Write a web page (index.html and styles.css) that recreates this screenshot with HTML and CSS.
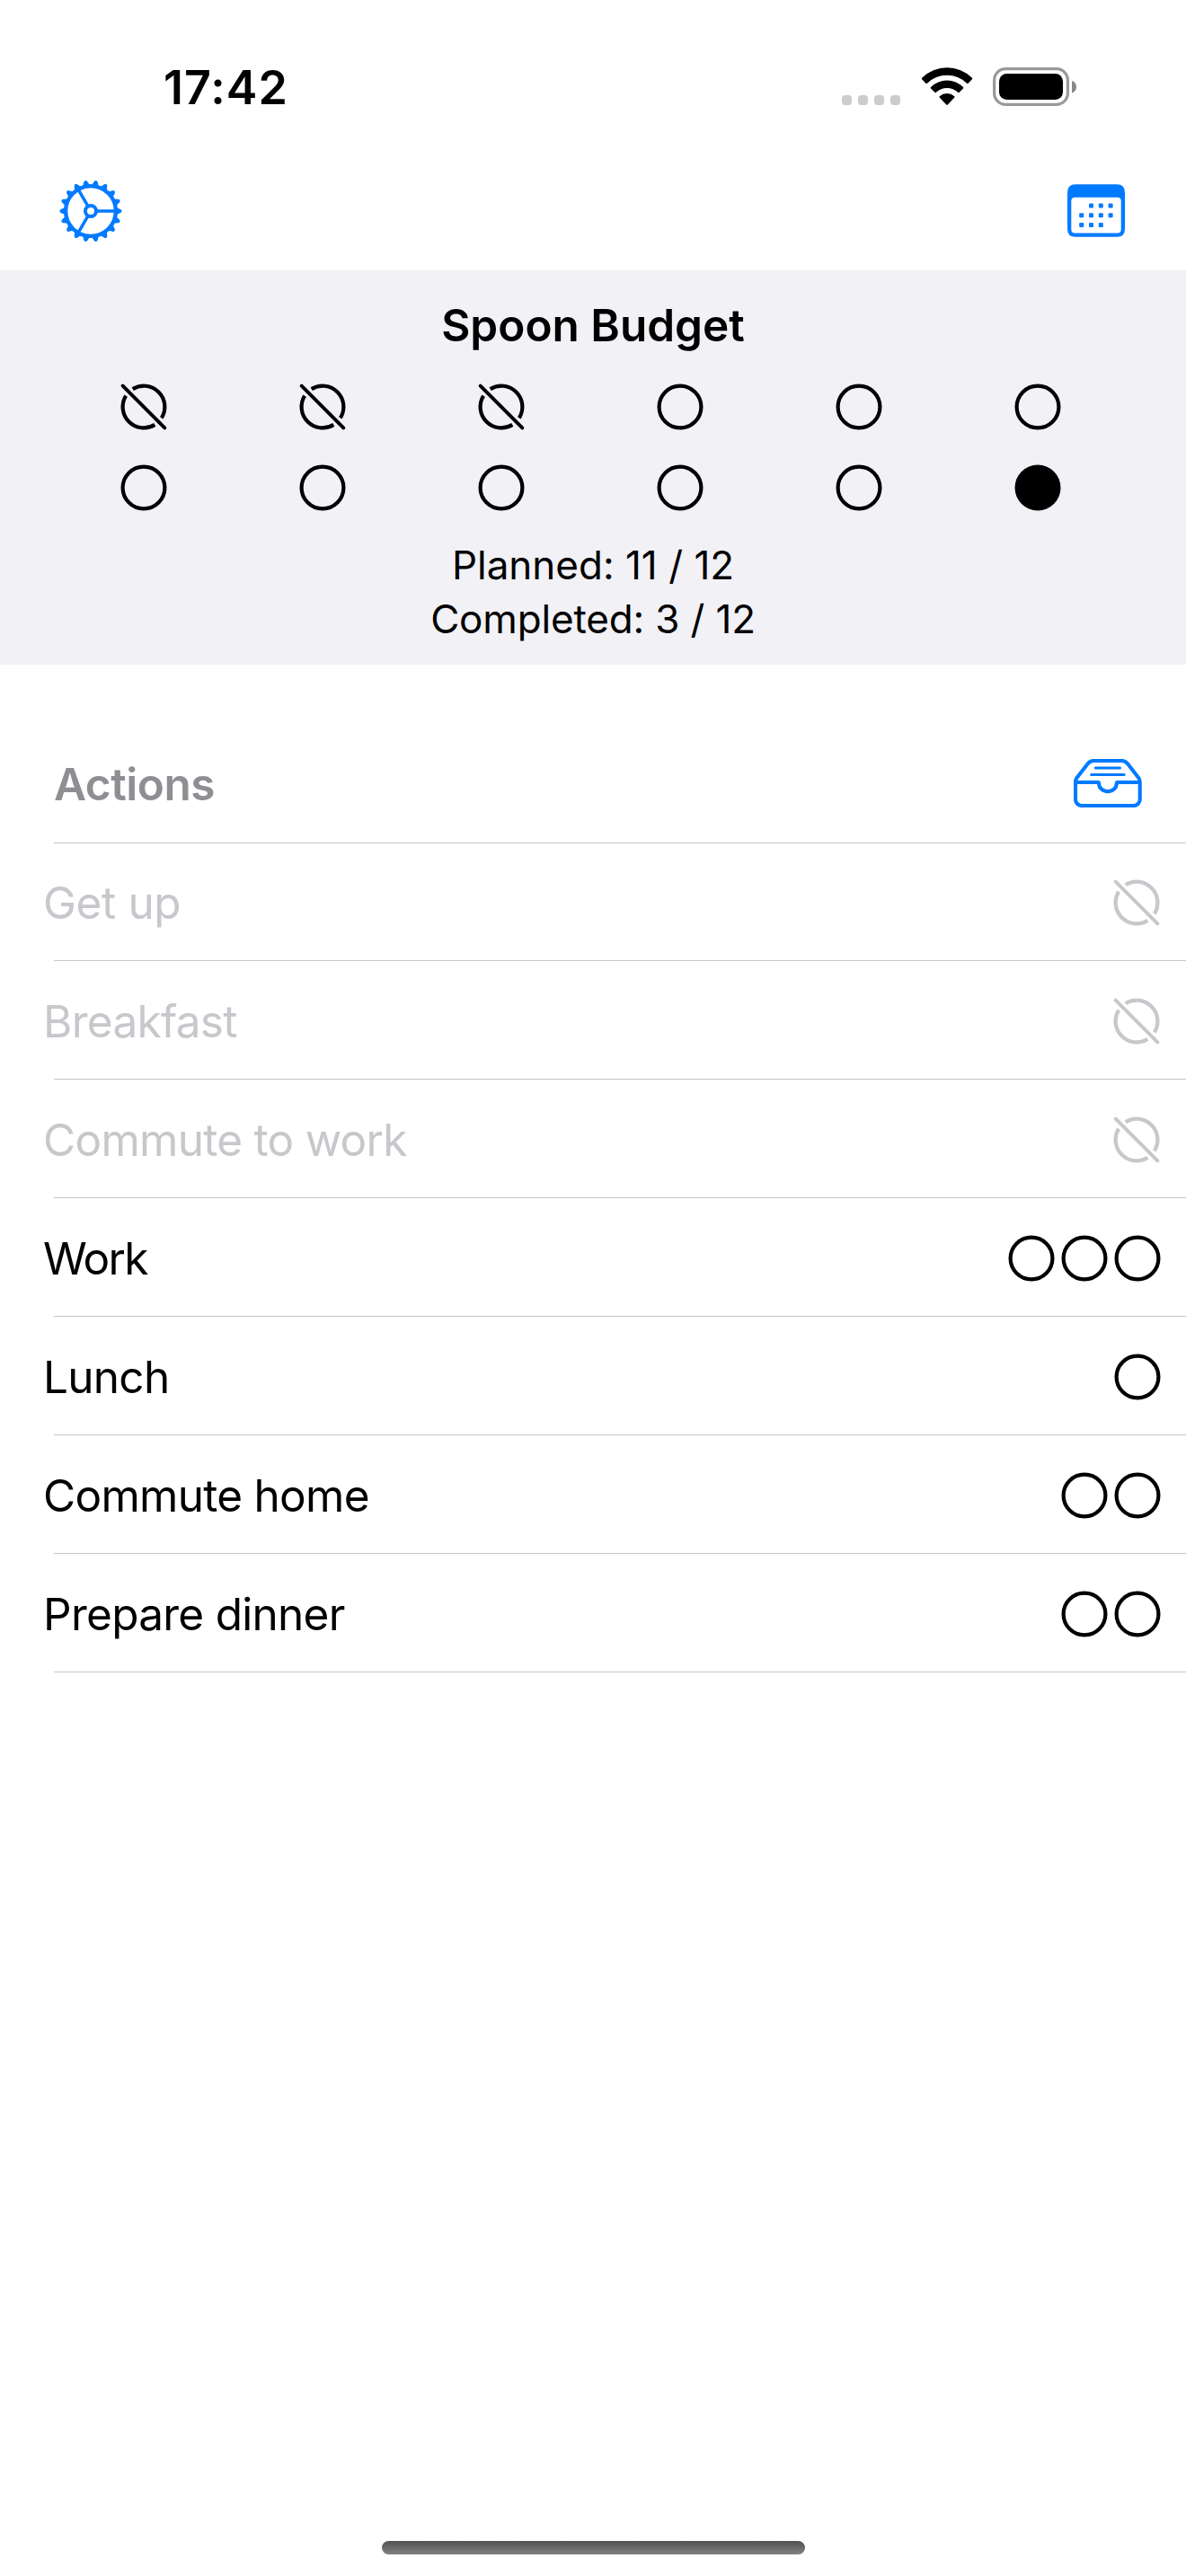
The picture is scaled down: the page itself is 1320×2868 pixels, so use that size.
FILE: index.html
```html
<!DOCTYPE html>
<html lang="en">
<head>
<meta charset="utf-8">
<title>Spoon Budget</title>
<link rel="stylesheet" href="styles.css">
</head>
<body>
<svg class="defs" aria-hidden="true">
  <symbol id="spoon-open" viewBox="-27 -27 54 54">
    <circle r="23.4" fill="none" stroke="currentColor" stroke-width="4.2"/>
  </symbol>
  <symbol id="spoon-reserve" viewBox="-27 -27 54 54">
    <circle r="25.5" fill="currentColor"/>
  </symbol>
  <symbol id="spoon-used" viewBox="-27 -27 54 54">
    <g fill="none" stroke="currentColor">
      <path stroke-width="4.2" d="M-12.3-19.9A23.4 23.4 0 0 1 19.9 12.3M12.3 19.9A23.4 23.4 0 0 1-19.9-12.3"/>
      <path stroke-width="4" stroke-linecap="round" d="M-23.3-23.3 23.3 23.3"/>
    </g>
  </symbol>
  <symbol id="tooth" viewBox="-35 -35 70 70">
    <path fill="currentColor" d="M-4-28.5-2-33.2Q0-36 2-33.2L4-28.5Z"/>
  </symbol>
</svg>

<header class="status-bar">
  <time class="clock">17:42</time>
  <div class="status-icons">
    <div class="cellular"><i></i><i></i><i></i><i></i></div>
    <svg class="wifi" width="57" height="43" viewBox="0 0 57 43">
      <path d="M.6 13.3Q-.3 12.5.6 11.7A40 40 0 0 1 56.4 11.7Q57.3 12.5 56.4 13.3L52.1 17.7Q51.3 18.4 50.5 17.7A31.5 31.5 0 0 0 6.5 17.7Q5.7 18.4 4.9 17.7Z"/>
      <path d="M10.5 23.5Q9.8 22.8 10.5 22A25.5 25.5 0 0 1 46.5 22Q47.2 22.8 46.5 23.5L42.2 27.8Q41.4 28.5 40.6 27.8A17.8 17.8 0 0 0 16.4 27.8Q15.6 28.5 14.8 27.8Z"/>
      <path d="M20.2 33.6Q19.5 32.9 20.2 32.2A12.6 12.6 0 0 1 36.8 32.2Q37.5 32.9 36.8 33.6L29.3 41.5Q28.5 42.3 27.7 41.5Z"/>
    </svg>
    <svg class="battery" width="93" height="43" viewBox="0 0 93 43">
      <rect x="1.6" y="1.6" width="81.8" height="39.8" rx="12.6" fill="none" stroke="#999" stroke-width="3.2"/>
      <rect x="7" y="7" width="71" height="29" rx="8.5"/>
      <path d="M88 15Q93 16.7 93 21.7T88 28.4Z" fill="#888"/>
    </svg>
  </div>
</header>

<nav class="toolbar">
  <svg class="icon" width="70" height="70" viewBox="-35 -35 70 70">
    <g fill="none" stroke="currentColor">
      <circle r="27.9" stroke-width="4.4"/>
      <circle r="6" stroke-width="4"/>
      <path stroke-width="3.5" d="M7 0H27M-3.5 6.1-13.5 23.4M-3.5-6.1-13.5-23.4"/>
    </g>
    <g>
      <use href="#tooth" x="-35" y="-35" width="70" height="70" transform="rotate(10)"/>
      <use href="#tooth" x="-35" y="-35" width="70" height="70" transform="rotate(30)"/>
      <use href="#tooth" x="-35" y="-35" width="70" height="70" transform="rotate(50)"/>
      <use href="#tooth" x="-35" y="-35" width="70" height="70" transform="rotate(70)"/>
      <use href="#tooth" x="-35" y="-35" width="70" height="70" transform="rotate(90)"/>
      <use href="#tooth" x="-35" y="-35" width="70" height="70" transform="rotate(110)"/>
      <use href="#tooth" x="-35" y="-35" width="70" height="70" transform="rotate(130)"/>
      <use href="#tooth" x="-35" y="-35" width="70" height="70" transform="rotate(150)"/>
      <use href="#tooth" x="-35" y="-35" width="70" height="70" transform="rotate(170)"/>
      <use href="#tooth" x="-35" y="-35" width="70" height="70" transform="rotate(190)"/>
      <use href="#tooth" x="-35" y="-35" width="70" height="70" transform="rotate(210)"/>
      <use href="#tooth" x="-35" y="-35" width="70" height="70" transform="rotate(230)"/>
      <use href="#tooth" x="-35" y="-35" width="70" height="70" transform="rotate(250)"/>
      <use href="#tooth" x="-35" y="-35" width="70" height="70" transform="rotate(270)"/>
      <use href="#tooth" x="-35" y="-35" width="70" height="70" transform="rotate(290)"/>
      <use href="#tooth" x="-35" y="-35" width="70" height="70" transform="rotate(310)"/>
      <use href="#tooth" x="-35" y="-35" width="70" height="70" transform="rotate(330)"/>
      <use href="#tooth" x="-35" y="-35" width="70" height="70" transform="rotate(350)"/>
    </g>
  </svg>
  <svg class="icon" width="64" height="59" viewBox="0 0 64 59">
    <path fill="currentColor" fill-rule="evenodd" d="M9 .3H55Q64 .3 64 9.3V49.7Q64 58.7 55 58.7H9Q0 58.7 0 49.7V9.3Q0 .3 9 .3ZM8.3 14.8Q4.3 14.8 4.3 18.8V50.5Q4.3 54.5 8.3 54.5H55.7Q59.7 54.5 59.7 50.5V18.8Q59.7 14.8 55.7 14.8Z"/>
    <g fill="currentColor">
      <rect x="24" y="21.6" width="5" height="5" rx="1"/><rect x="34.8" y="21.6" width="5" height="5" rx="1"/><rect x="45.6" y="21.6" width="5" height="5" rx="1"/>
      <rect x="13.2" y="32.2" width="5" height="5" rx="1"/><rect x="24" y="32.2" width="5" height="5" rx="1"/><rect x="34.8" y="32.2" width="5" height="5" rx="1"/><rect x="45.6" y="32.2" width="5" height="5" rx="1"/>
      <rect x="13.2" y="42.9" width="5" height="5" rx="1"/><rect x="24" y="42.9" width="5" height="5" rx="1"/><rect x="34.8" y="42.9" width="5" height="5" rx="1"/>
    </g>
  </svg>
</nav>

<section class="budget">
  <h1 class="budget-title">Spoon Budget</h1>
  <div class="spoon-grid">
    <svg class="spoon"><use href="#spoon-used"/></svg>
    <svg class="spoon"><use href="#spoon-used"/></svg>
    <svg class="spoon"><use href="#spoon-used"/></svg>
    <svg class="spoon"><use href="#spoon-open"/></svg>
    <svg class="spoon"><use href="#spoon-open"/></svg>
    <svg class="spoon"><use href="#spoon-open"/></svg>
    <svg class="spoon"><use href="#spoon-open"/></svg>
    <svg class="spoon"><use href="#spoon-open"/></svg>
    <svg class="spoon"><use href="#spoon-open"/></svg>
    <svg class="spoon"><use href="#spoon-open"/></svg>
    <svg class="spoon"><use href="#spoon-open"/></svg>
    <svg class="spoon"><use href="#spoon-reserve"/></svg>
  </div>
  <p class="tally">Planned: 11 / 12</p>
  <p class="tally tally-completed">Completed: 3 / 12</p>
</section>

<main class="actions">
  <div class="actions-header">
    <h2 class="actions-title">Actions</h2>
    <svg class="icon" width="76" height="54" viewBox="0 0 76 54" fill="none" stroke="currentColor">
      <path stroke-width="4.1" d="M2 25.5Q2 23 3.5 21L15.5 5.5Q18.3 2 22 2H53.7Q57.4 2 60.2 5.5L72.2 21Q73.7 23 73.7 25.5V45A7 7 0 0 1 66.7 52H9A7 7 0 0 1 2 45Z"/>
      <path stroke-width="4.1" d="M2 26H27Q28 26 28 27.2A9.9 9 0 0 0 47.8 27.2Q47.8 26 48.8 26H73.7"/>
      <path stroke-width="3" stroke-linecap="round" d="M24.3 10H51.5M19.6 17.6H56.2"/>
    </svg>
  </div>
  <hr class="divider">
  <div class="row row-first done"><span class="label label-get-up">Get up</span><span class="cost"><svg class="spoon"><use href="#spoon-used"/></svg></span></div>
  <hr class="divider">
  <div class="row done"><span class="label">Breakfast</span><span class="cost"><svg class="spoon"><use href="#spoon-used"/></svg></span></div>
  <hr class="divider">
  <div class="row done"><span class="label">Commute to work</span><span class="cost"><svg class="spoon"><use href="#spoon-used"/></svg></span></div>
  <hr class="divider">
  <div class="row"><span class="label label-work">Work</span><span class="cost"><svg class="spoon"><use href="#spoon-open"/></svg><svg class="spoon"><use href="#spoon-open"/></svg><svg class="spoon"><use href="#spoon-open"/></svg></span></div>
  <hr class="divider">
  <div class="row"><span class="label">Lunch</span><span class="cost"><svg class="spoon"><use href="#spoon-open"/></svg></span></div>
  <hr class="divider">
  <div class="row"><span class="label">Commute home</span><span class="cost"><svg class="spoon"><use href="#spoon-open"/></svg><svg class="spoon"><use href="#spoon-open"/></svg></span></div>
  <hr class="divider">
  <div class="row"><span class="label">Prepare dinner</span><span class="cost"><svg class="spoon"><use href="#spoon-open"/></svg><svg class="spoon"><use href="#spoon-open"/></svg></span></div>
  <hr class="divider">
</main>

<footer class="home-area"><div class="home-indicator"></div></footer>
</body>
</html>
```
FILE: styles.css
```css
* { box-sizing: border-box; margin: 0; padding: 0; }

body {
  display: flex;
  flex-direction: column;
  width: 1320px;
  height: 2868px;
  background: #fff;
  color: #000;
  font-family: Inter, "Liberation Sans", sans-serif;
  font-size: 49.5px;
}

svg { display: block; flex: none; }
.defs { display: none; }
.icon { color: #007aff; }
.spoon { width: 54px; height: 54px; }

/* Status bar */
.status-bar {
  display: flex;
  justify-content: space-between;
  align-items: flex-start;
  height: 168px;
  padding: 75px 122px 0 182px;
}
.clock {
  font-size: 52px;
  font-weight: 600;
  line-height: 46px;
  letter-spacing: 1px;
}
.status-icons { display: flex; align-items: flex-start; }
.cellular { display: flex; gap: 7px; margin: 31px 23px 0 0; }
.cellular i {
  width: 11px;
  height: 11px;
  border-radius: 3.5px;
  background: #ccc;
}
.wifi { margin-right: 23px; transform: translateX(.5px); }

/* Toolbar */
.toolbar {
  display: flex;
  justify-content: space-between;
  align-items: center;
  height: 133px;
  padding: 0 68px 0 66px;
}

/* Budget summary */
.budget {
  height: 439px;
  padding-top: 31px;
  background: #f2f1f6;
  text-align: center;
}
.budget-title { font-size: 49.5px; font-weight: 600; line-height: 60px; }
.spoon-grid {
  display: grid;
  grid-template-columns: repeat(6, 199px);
  grid-auto-rows: 90px;
  place-items: center;
  margin: 16px 0 11px 60px;
}
.tally { font-size: 44px; line-height: 60px; }
.tally-completed { letter-spacing: -.16px; }

/* Action list */
.actions { padding-top: 66px; }
.actions-header {
  display: flex;
  justify-content: space-between;
  align-items: center;
  height: 132px;
  padding: 0 49px 0 60px;
}
.actions-title {
  padding-top: 2px;
  color: #8e8e93;
  font-size: 49.5px;
  font-weight: 600;
  line-height: 60px;
  letter-spacing: -.44px;
}
.divider {
  height: 1px;
  margin-left: 60px;
  border: 0;
  background: #c6c6c8;
}
.row {
  display: flex;
  justify-content: space-between;
  align-items: center;
  height: 131px;
  padding: 2px 27px 0 48px;
}
.row-first { height: 130px; }
.label { line-height: 60px; letter-spacing: -.72px; }
.label-get-up { letter-spacing: -.38px; }
.label-work { letter-spacing: -1.7px; }
.cost { display: flex; gap: 5px; }
.done { color: #c7c7cc; }
.done .cost { margin-right: 1px; }

/* Home indicator */
.home-area {
  display: flex;
  justify-content: center;
  margin-top: auto;
  padding-bottom: 24px;
}
.home-indicator {
  width: 471px;
  height: 15px;
  border-radius: 8px;
  background: linear-gradient(#505150, #828282);
}
```
